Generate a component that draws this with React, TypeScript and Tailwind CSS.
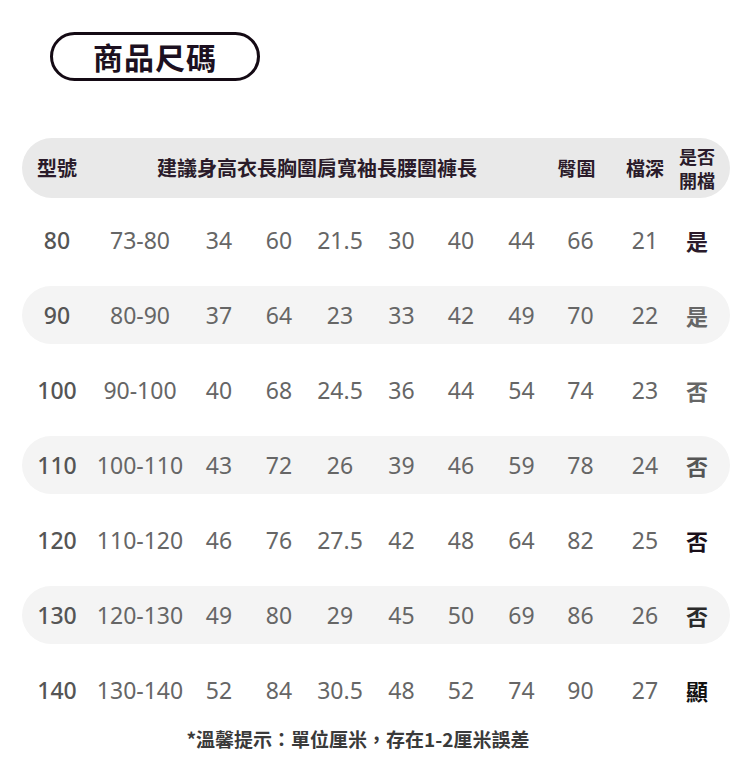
const rows = [
  { size: "80", vals: ["73-80", "34", "60", "21.5", "30", "40", "44", "66", "21"], open: "是", openCls: "text-[#2a1a2a]", band: false },
  { size: "90", vals: ["80-90", "37", "64", "23", "33", "42", "49", "70", "22"], open: "是", openCls: "text-[#666666]", band: true },
  { size: "100", vals: ["90-100", "40", "68", "24.5", "36", "44", "54", "74", "23"], open: "否", openCls: "text-[#666666]", band: false },
  { size: "110", vals: ["100-110", "43", "72", "26", "39", "46", "59", "78", "24"], open: "否", openCls: "text-[#555555]", band: true },
  { size: "120", vals: ["110-120", "46", "76", "27.5", "42", "48", "64", "82", "25"], open: "否", openCls: "text-[#1a0f1a]", band: false },
  { size: "130", vals: ["120-130", "49", "80", "29", "45", "50", "69", "86", "26"], open: "否", openCls: "text-[#2a2a2a]", band: true },
  { size: "140", vals: ["130-140", "52", "84", "30.5", "48", "52", "74", "90", "27"], open: "顯", openCls: "text-[#111111]", band: false },
];

// widths of the value columns (after the size column)
const colW = ["w-[96px]", "w-[62px]", "w-[58px]", "w-[64px]", "w-[59px]", "w-[60px]", "w-[61px]", "w-[57px]", "w-[72px]"];

const cjk = "font-['Noto_Sans_CJK_TC','Noto_Sans',sans-serif]";
const num = "font-['Noto_Sans','Open_Sans',sans-serif]";

export default function App() {
  return (
    <div className="w-[750px] h-[772px] bg-white overflow-hidden pt-[32px]">
      <div className={`ml-[50px] w-[210px] h-[49px] rounded-full border-[3px] border-[#140a14] flex items-center justify-center ${cjk} text-[30px] font-bold text-[#1c1020] tracking-[1px]`}>
        商品尺碼
      </div>

      <div className="mx-[22px] w-[708px] mt-[57px] flex flex-col">
        {/* header band */}
        <div className={`h-[60px] rounded-full bg-[#e9e9e9] flex items-center ${cjk} font-bold text-[#2a1b2a]`}>
          <div className="w-[70px] text-center text-[20px]">型號</div>
          <div className="w-[460px] text-center text-[20px] pr-[10px]">建議身高衣長胸圍肩寬袖長腰圍褲長</div>
          <div className="w-[57px] text-center text-[19px] pr-[8px]">臀圍</div>
          <div className="w-[72px] text-center text-[19px]">檔深</div>
          <div className="w-[32px] flex justify-center">
            <div className="text-center text-[18px] leading-[24px] whitespace-nowrap flex flex-col items-center">
              <span>是否</span>
              <span>開檔</span>
            </div>
          </div>
        </div>

        <div className="mt-[13px] flex flex-col gap-[17px]">
          {rows.map((r) => (
            <div key={r.size} className={`h-[58px] rounded-full flex items-center ${r.band ? "bg-[#f4f4f4]" : ""}`}>
              <div className={`w-[70px] text-center ${num} text-[23px] font-medium text-[#555555]`}>{r.size}</div>
              {r.vals.map((v, i) => (
                <div key={i} className={`${colW[i]} text-center ${num} text-[23px] text-[#666666] whitespace-nowrap`}>{v}</div>
              ))}
              <div className={`w-[32px] text-center ${cjk} text-[22px] font-bold ${r.openCls}`}>{r.open}</div>
            </div>
          ))}
        </div>

        <div className={`mt-[8px] text-center ${cjk} text-[19px] font-bold text-[#3a3a3a] leading-[24px] pr-[36px]`}>
          *溫馨提示：單位厘米，存在1-2厘米誤差
        </div>
      </div>
    </div>
  );
}
